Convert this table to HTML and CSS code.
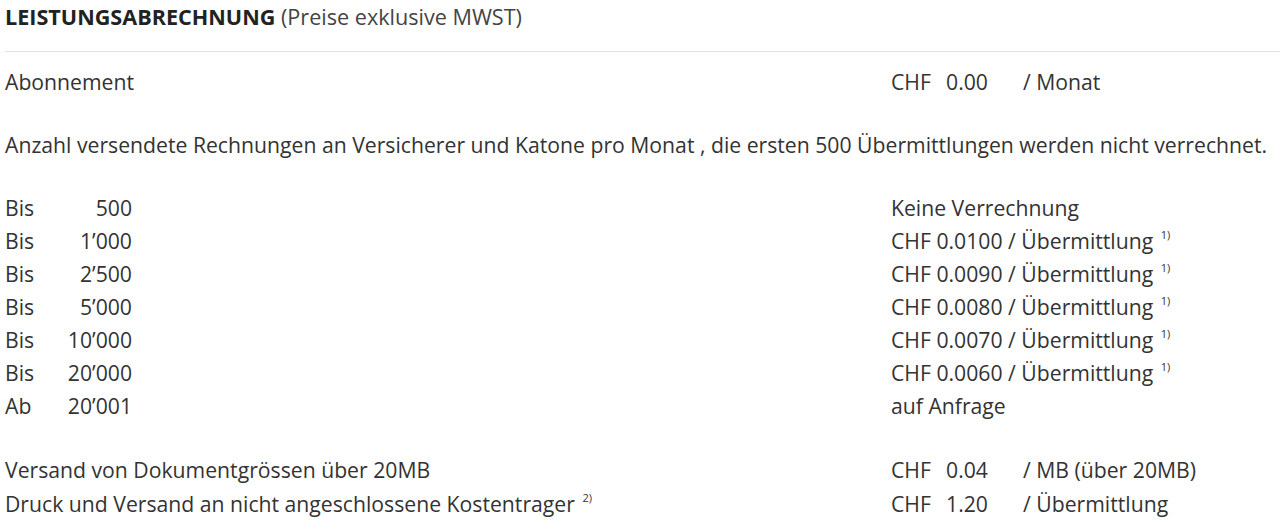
FILE: index.html
```html
<!DOCTYPE html>
<html>
    <head>
        <title>Leistungsabrechnung</title>
        <link rel="stylesheet" href="styles.css">
    </head>
    <body>
        <div class="page">
            <h2 class="title"><b>LEISTUNGSABRECHNUNG</b> (Preise exklusive MWST)</h2>
            <hr class="sep">

            <div class="row">
                <div class="left">Abonnement</div>
                <div class="right"><span class="chf">CHF</span><span class="amt">0.00</span><span>/ Monat</span></div>
            </div>

            <p class="info">Anzahl versendete Rechnungen an Versicherer und Katone pro Monat , die ersten 500 Übermittlungen werden nicht verrechnet.</p>

            <div class="group">
                <div class="row">
                    <div class="left"><span class="pre">Bis</span><span class="num">500</span></div>
                    <div class="right">Keine Verrechnung</div>
                </div>
                <div class="row">
                    <div class="left"><span class="pre">Bis</span><span class="num">1’000</span></div>
                    <div class="right">CHF 0.0100 / Übermittlung <sup>1)</sup></div>
                </div>
                <div class="row">
                    <div class="left"><span class="pre">Bis</span><span class="num">2’500</span></div>
                    <div class="right">CHF 0.0090 / Übermittlung <sup>1)</sup></div>
                </div>
                <div class="row">
                    <div class="left"><span class="pre">Bis</span><span class="num">5’000</span></div>
                    <div class="right">CHF 0.0080 / Übermittlung <sup>1)</sup></div>
                </div>
                <div class="row">
                    <div class="left"><span class="pre">Bis</span><span class="num">10’000</span></div>
                    <div class="right">CHF 0.0070 / Übermittlung <sup>1)</sup></div>
                </div>
                <div class="row">
                    <div class="left"><span class="pre">Bis</span><span class="num">20’000</span></div>
                    <div class="right">CHF 0.0060 / Übermittlung <sup>1)</sup></div>
                </div>
                <div class="row">
                    <div class="left"><span class="pre">Ab</span><span class="num">20’001</span></div>
                    <div class="right">auf Anfrage</div>
                </div>
            </div>

            <div class="group extra">
                <div class="row">
                    <div class="left">Versand von Dokumentgrössen über 20MB</div>
                    <div class="right"><span class="chf">CHF</span><span class="amt">0.04</span><span>/ MB (über 20MB)</span></div>
                </div>
                <div class="row last">
                    <div class="left">Druck und Versand an nicht angeschlossene Kostentrager <sup>2)</sup></div>
                    <div class="right"><span class="chf">CHF</span><span class="amt">1.20</span><span>/ Übermittlung</span></div>
                </div>
            </div>
        </div>
    </body>
</html>
```

FILE: styles.css
```css
body{
    margin: 0;
    font-family: "Open Sans", "Noto Sans", sans-serif;
    color: rgb(51, 51, 51);
    font-size: 21.2px;
}
.page{
    padding-left: 5px;
}
.title{
    margin: 0;
    font-size: 21.6px;
    font-weight: 400;
    line-height: 33px;
    color: rgb(68, 68, 68);
}
.title b{
    font-weight: 700;
    color: rgb(34, 34, 34);
}
.sep{
    margin: 18px 0 13px 0;
    border: none;
    border-top: 1px solid rgb(214, 230, 232);
}
.row{
    display: grid;
    grid-template-columns: 886px 1fr;
    line-height: 33px;
    white-space: nowrap;
}
.row.last{
    margin-top: 1px;
}
.info{
    margin: 30px 0 0 0;
    line-height: 33px;
    white-space: nowrap;
}
.group{
    margin-top: 30px;
}
.group.extra{
    margin-top: 31px;
}
.pre{
    display: inline-block;
    width: 40px;
}
.num{
    display: inline-block;
    width: 87px;
    text-align: right;
}
.chf{
    display: inline-block;
    width: 40px;
}
.amt{
    display: inline-block;
    width: 57px;
    margin-right: 35px;
    text-align: right;
}
sup{
    font-size: 11px;
    vertical-align: 10px;
    line-height: 0;
    margin-left: 2px;
}
```
